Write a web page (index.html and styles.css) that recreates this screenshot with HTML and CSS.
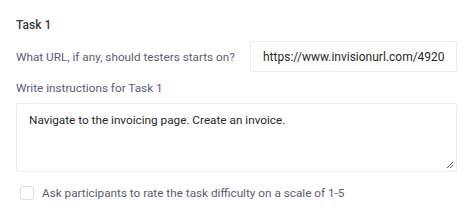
FILE: index.html
```html
<!DOCTYPE html>
<html>
<head>
<meta charset="utf-8">
<link rel="stylesheet" href="styles.css">
</head>
<body>
<div class="task">
  <div class="title">Task 1</div>
  <div class="url-row">
    <label class="label">What URL, if any, should testers starts on?</label>
    <div class="input"><span class="input-text">https://www.invisionurl.com/49208</span></div>
  </div>
  <label class="label instr">Write instructions for Task 1</label>
  <div class="textarea">Navigate to the invoicing page. Create an invoice.
    <svg class="grip" width="8" height="8" viewBox="0 0 8 8"><path d="M7 1L1 7M7 4L4 7" stroke="#666" stroke-width="1"/></svg>
  </div>
  <div class="check-row">
    <span class="box"></span>
    <span class="check-label">Ask participants to rate the task difficulty on a scale of 1-5</span>
  </div>
</div>
</body>
</html>
```
FILE: styles.css
```css
html, body { margin: 0; padding: 0; background: #fff; }
body { font-family: Roboto, "Noto Sans", sans-serif; font-size: 11.75px; width: 474px; height: 214px; overflow: hidden; }
.task { padding: 17px 17px 0 16px; }
.title { font-weight: 500; color: #363946; font-size: 12px; line-height: 16px; }
.url-row { display: flex; align-items: center; justify-content: space-between; margin-top: 8px; }
.label { color: #5a5d74; line-height: 16px; display: block; white-space: nowrap; }
.input { flex-shrink: 0; width: 207px; height: 31px; border: 1px solid #ececf0; border-radius: 2px; padding: 0 11px 0 12px; box-sizing: border-box; display: flex; align-items: center; }
.input-text { display: block; overflow: hidden; white-space: nowrap; color: #2a2a2a; font-size: 12px; line-height: 16px; width: 100%; }
.instr { margin-top: 8px; }
.textarea { position: relative; margin-top: 7px; height: 69px; border: 1px solid #ececf0; border-radius: 2px; box-sizing: border-box; padding: 8px 12px; color: #2a2a2a; line-height: 16px; }
.grip { position: absolute; right: 2px; bottom: 2px; }
.check-row { display: flex; align-items: center; margin-top: 13px; padding-left: 4px; }
.box { width: 12px; height: 12px; border: 1px solid #dcdce2; border-radius: 3px; }
.check-label { margin-left: 8px; color: #5a5d74; line-height: 16px; }
```
